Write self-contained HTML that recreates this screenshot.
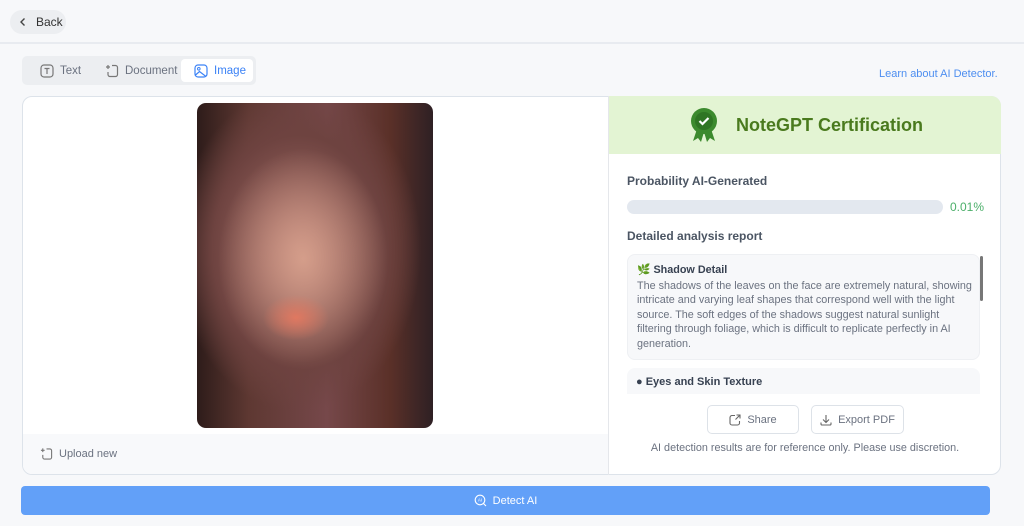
<!DOCTYPE html>
<html><head><meta charset="utf-8"><style>
*{box-sizing:border-box;margin:0;padding:0}
body{width:1024px;height:526px;overflow:hidden;background:#f7f8fa;font-family:"Liberation Sans",sans-serif;position:relative;color:#374151}
.abs{position:absolute}
.top{left:0;top:0;width:1024px;height:44px;border-bottom:2px solid #e8ebf0;background:#f7f8fa}
.back{left:10px;top:10px;width:56px;height:24px;border-radius:12px;background:#eceef1;font-size:12px;color:#333;display:flex;align-items:center;padding-left:8px;gap:8px}
.tabs{left:22px;top:56px;width:234px;height:29px;background:#eceef1;border-radius:5px}
.tab{position:absolute;top:3px;height:23px;display:flex;align-items:center;gap:6px;font-size:11.5px;color:#6b7280}
.card{left:22px;top:96px;width:979px;height:379px;border:1px solid #dde3ea;border-radius:10px;background:#fff;overflow:hidden}
.img{left:197px;top:103px;width:236px;height:325px;border-radius:9px;overflow:hidden;
background:radial-gradient(ellipse 14% 7% at 42% 66%,rgba(230,120,95,.9),rgba(230,120,95,0) 100%),
radial-gradient(ellipse 36% 34% at 45% 48%,rgba(215,160,140,.95),rgba(180,120,110,0) 100%),
radial-gradient(ellipse 52% 50% at 43% 45%,#a9726c,#6e4340 70%,rgba(50,28,28,0) 100%),
linear-gradient(90deg,#2e1c1a 0%,#5e3832 22%,#76484a 55%,#5a3028 82%,#2e2024 100%)}
.right{left:608px;top:96px;width:393px;height:379px;border-left:1px solid #e5e7eb}
</style></head><body>
<div class="abs top"></div>
<div class="abs back"><svg width="10" height="10" viewBox="0 0 10 10"><path d="M6.5 1.5L3 5l3.5 3.5" stroke="#444" stroke-width="1.4" fill="none"/></svg>Back</div>
<div class="abs tabs">
 <div class="tab" style="left:18px"><svg width="14" height="14" viewBox="0 0 14 14"><rect x="1" y="1" width="12" height="12" rx="3" stroke="#777" fill="none" stroke-width="1.2"/><path d="M4.5 4.5h5M7 4.5v5.5" stroke="#777" stroke-width="1.2"/></svg>Text</div>
 <div class="tab" style="left:83px"><svg width="14" height="14" viewBox="0 0 14 14"><path d="M3 1v4M1 3h4M7 1.5h3.5a2 2 0 012 2v7a2 2 0 01-2 2H5a2 2 0 01-2-2V8" stroke="#777" fill="none" stroke-width="1.2"/></svg>Document</div>
 <div class="tab" style="left:159px;width:72px;background:#fff;border-radius:4px;padding-left:13px;color:#3b82f6"><svg width="14" height="14" viewBox="0 0 14 14"><rect x="1" y="1" width="12" height="12" rx="3" stroke="#3b82f6" fill="none" stroke-width="1.2"/><circle cx="4.8" cy="4.8" r="1.3" stroke="#3b82f6" fill="none"/><path d="M1.5 11l4-3.5 6.5 5" stroke="#3b82f6" fill="none" stroke-width="1.2"/></svg>Image</div>
</div>
<div class="abs" style="left:879px;top:68px;font-size:11px;color:#4d8ef0">Learn about AI Detector.</div>
<div class="abs card">
 <div class="abs" style="left:0;top:337px;width:586px;height:42px;background:#f8f9fb"></div>
 <div class="abs" style="left:17px;top:350px;font-size:11px;color:#6b7280;display:flex;gap:6px;align-items:center"><svg width="13" height="14" viewBox="0 0 14 14"><path d="M3 1v4M1 3h4M7 1.5h3.5a2 2 0 012 2v7a2 2 0 01-2 2H5a2 2 0 01-2-2V8" stroke="#777" fill="none" stroke-width="1.2"/></svg>Upload new</div>
</div>
<div class="abs img"></div>
<div class="abs right" style="border-radius:0 10px 10px 0;overflow:hidden">
 <div class="abs" style="left:0;top:0;width:392px;height:58px;background:#e3f4d3"></div>
 <svg class="abs" style="left:80px;top:11px" width="30" height="36" viewBox="0 0 30 36"><path d="M8 22l-4 12 5-3 3 4 3-10zM22 22l4 12-5-3-3 4-3-10z" fill="#3c8a2e"/><circle cx="15" cy="14" r="13" fill="#3c8a2e"/><circle cx="15" cy="14" r="9" fill="#2f7524"/><path d="M10.5 14l3 3 6-6" stroke="#fff" stroke-width="2.2" fill="none"/></svg>
 <div class="abs" style="left:127px;top:19px;font-size:18px;font-weight:bold;color:#4a7a1e">NoteGPT Certification</div>
 <div class="abs" style="left:18px;top:78px;font-size:12px;font-weight:bold;color:#4b5563">Probability AI-Generated</div>
 <div class="abs" style="left:18px;top:104px;width:316px;height:14px;border-radius:7px;background:#e3e8ef"></div>
 <div class="abs" style="left:341px;top:104px;font-size:12px;color:#4caf6a">0.01%</div>
 <div class="abs" style="left:18px;top:133px;font-size:12px;font-weight:bold;color:#4b5563">Detailed analysis report</div>
 <div class="abs" style="left:18px;top:158px;width:353px;height:106px;background:#f7f8fa;border:1px solid #eef0f3;border-radius:8px;padding:8px 4px 0 9px;font-size:10.8px;line-height:14.5px;color:#6b7280;white-space:nowrap">
  <div style="font-weight:bold;color:#374151;margin-bottom:1px">🌿 Shadow Detail</div>
  The shadows of the leaves on the face are extremely natural, showing<br>intricate and varying leaf shapes that correspond well with the light<br>source. The soft edges of the shadows suggest natural sunlight<br>filtering through foliage, which is difficult to replicate perfectly in AI<br>generation.</div>
 <div class="abs" style="left:371px;top:160px;width:3px;height:45px;background:#777;border-radius:2px"></div>
 <div class="abs" style="left:18px;top:272px;width:353px;height:26px;background:#f7f8fa;border-radius:8px 8px 0 0;padding:8px 9px;font-size:11px;font-weight:bold;color:#374151">● Eyes and Skin Texture</div>
 <div class="abs" style="left:98px;top:309px;width:92px;height:29px;border:1px solid #dde2e8;border-radius:5px;font-size:11px;color:#6b7280;display:flex;align-items:center;justify-content:center;gap:6px"><svg width="12" height="12" viewBox="0 0 12 12"><path d="M6 1.5H3a2 2 0 00-2 2v5.5a2 2 0 002 2h5.5a2 2 0 002-2V7M7.5 1h3.5v3.5M11 1L6.5 5.5" stroke="#666" fill="none" stroke-width="1.1"/></svg>Share</div>
 <div class="abs" style="left:202px;top:309px;width:93px;height:29px;border:1px solid #dde2e8;border-radius:5px;font-size:11px;color:#6b7280;display:flex;align-items:center;justify-content:center;gap:6px"><svg width="12" height="12" viewBox="0 0 12 12"><path d="M6 1v7M3 5.5L6 8.5 9 5.5M1 8.5v1.5a1 1 0 001 1h8a1 1 0 001-1V8.5" stroke="#666" fill="none" stroke-width="1.1"/></svg>Export PDF</div>
 <div class="abs" style="left:0;width:392px;top:346px;text-align:center;font-size:10.8px;color:#6b7280">AI detection results are for reference only. Please use discretion.</div>
</div>
<div class="abs" style="left:21px;top:486px;width:969px;height:29px;background:#62a0f8;border-radius:4px;color:#fff;font-size:11px;display:flex;align-items:center;justify-content:center;gap:6px"><svg width="13" height="13" viewBox="0 0 13 13"><circle cx="6" cy="6" r="4.8" stroke="#fff" fill="none" stroke-width="1.1"/><path d="M9.5 9.5l2.5 2.5" stroke="#fff" stroke-width="1.1"/><text x="6" y="7.6" font-size="4.5" fill="#fff" text-anchor="middle" font-family="Liberation Sans">AI</text></svg>Detect AI</div>
</body></html>
